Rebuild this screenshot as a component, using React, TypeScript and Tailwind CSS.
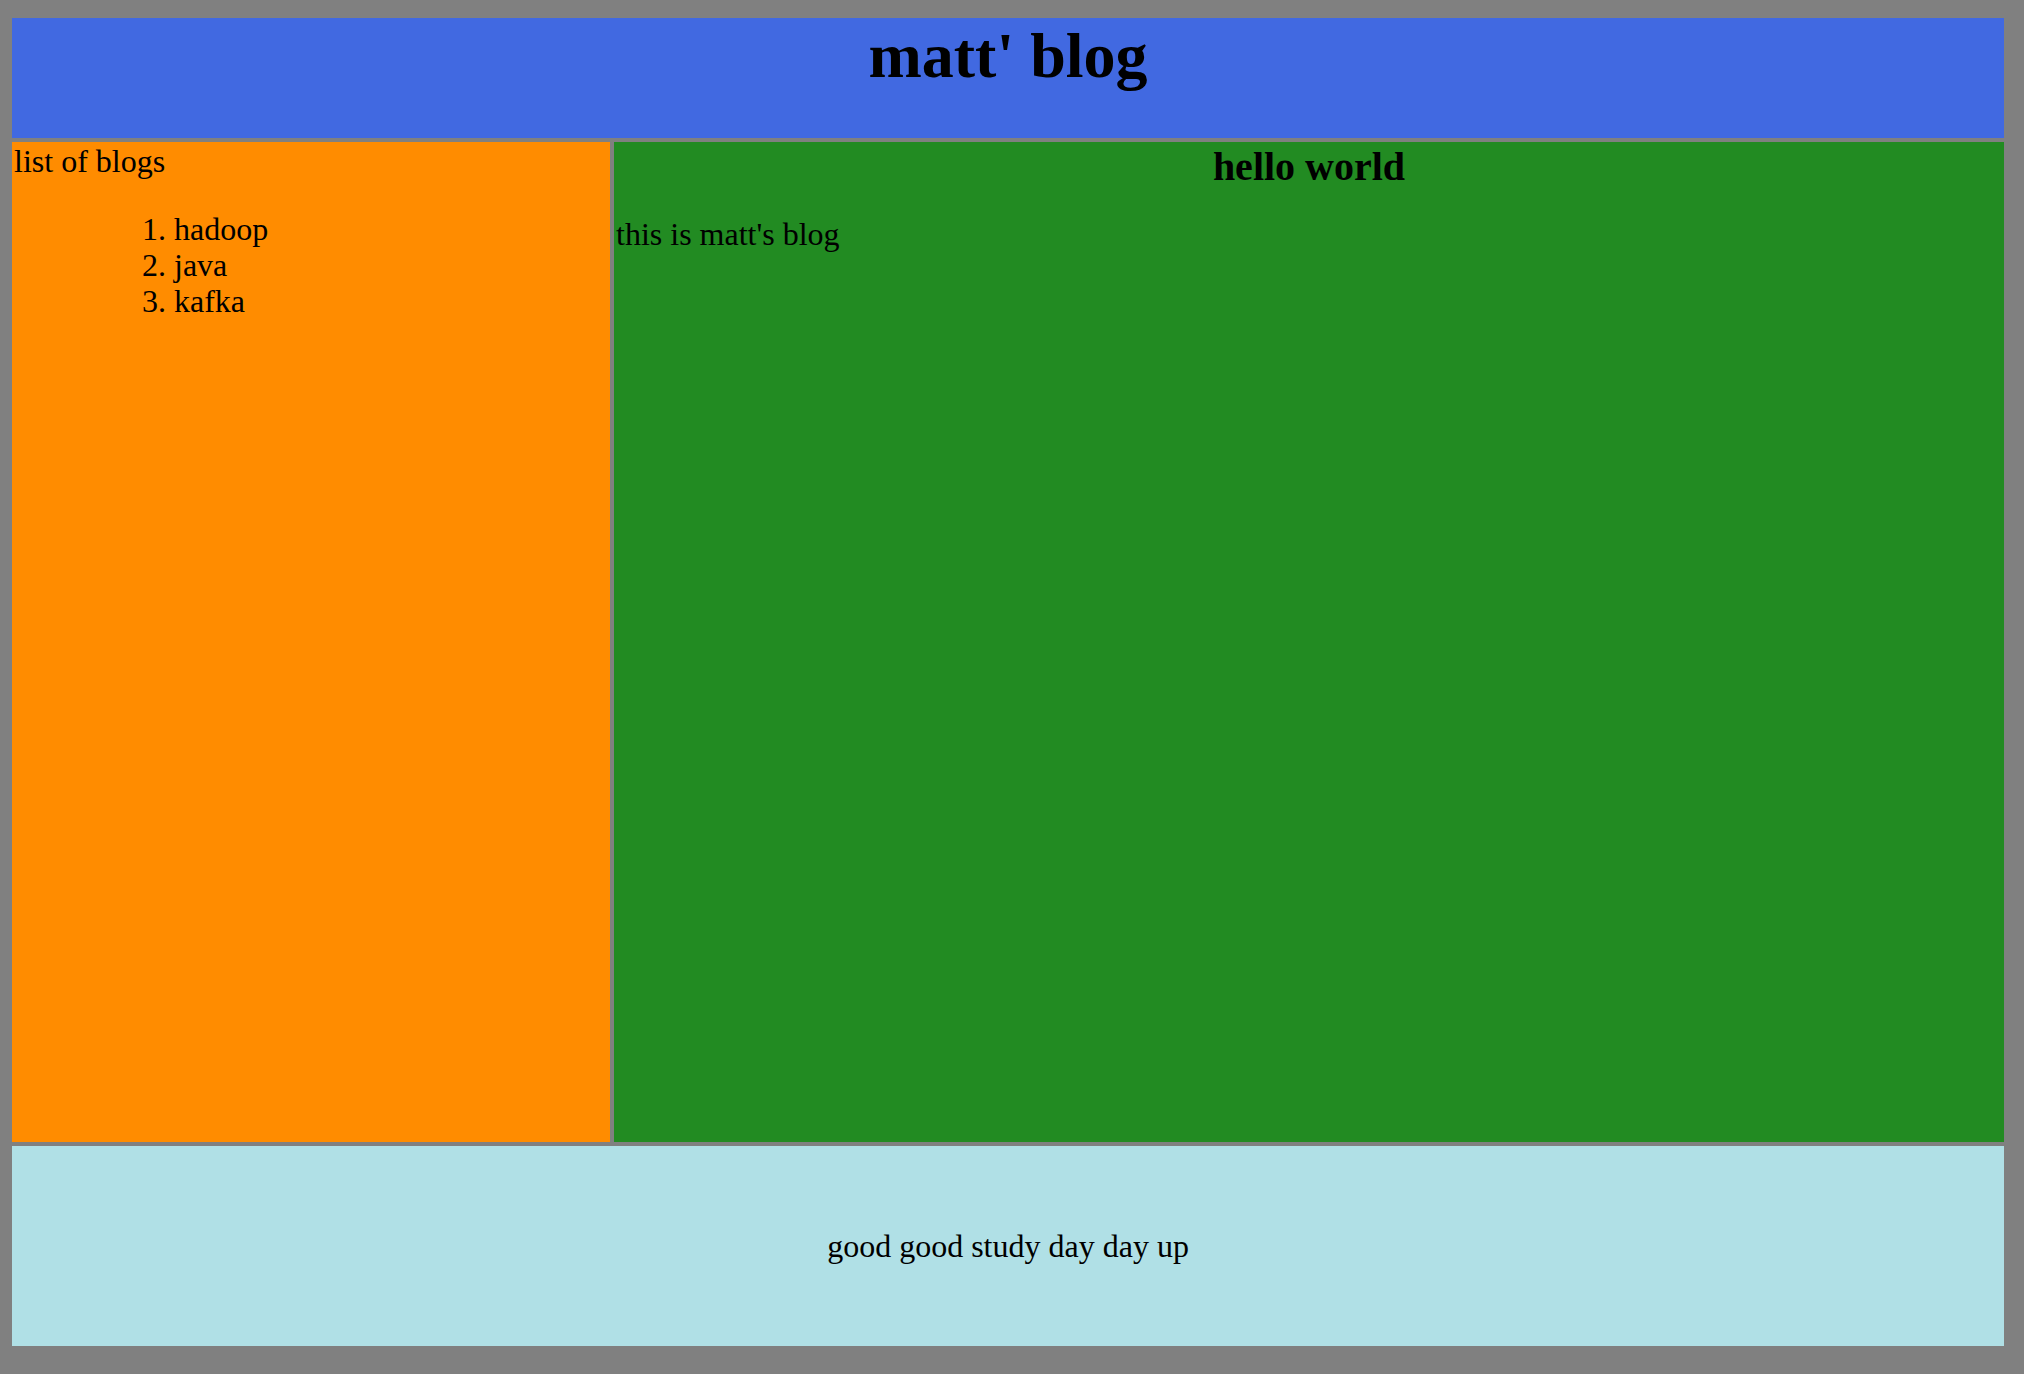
export default function App() {
  return (
    <div className="min-h-screen bg-[#808080] pt-[18px] pl-[12px] pr-[20px] pb-[28px] font-['Liberation_Serif',serif] text-black">
      <div className="flex flex-col gap-[4px]">
        <header className="h-[120px] bg-[#4169e1] pt-px">
          <h1 className="text-center text-[64px] font-bold leading-[normal]">matt' blog</h1>
        </header>

        <div className="flex h-[1000px] gap-[4px]">
          <aside className="w-[598px] shrink-0 bg-[#ff8c00] pl-[2px] pt-px text-[32px] leading-[normal]">
            <div>list of blogs</div>
            <ol className="mt-[31px] list-decimal pl-[160px] leading-[36px]">
              <li>hadoop</li>
              <li>java</li>
              <li>kafka</li>
            </ol>
          </aside>

          <main className="flex-1 bg-[#228b22] px-[2px] pt-px">
            <h2 className="text-center text-[40px] font-bold leading-[normal]">hello world</h2>
            <p className="mt-[26px] text-[32px] leading-[normal]">this is matt's blog</p>
          </main>
        </div>

        <footer className="flex h-[200px] items-center justify-center bg-[#b0e0e6] text-[32px] leading-[normal]">
          good good study day day up
        </footer>
      </div>
    </div>
  );
}
